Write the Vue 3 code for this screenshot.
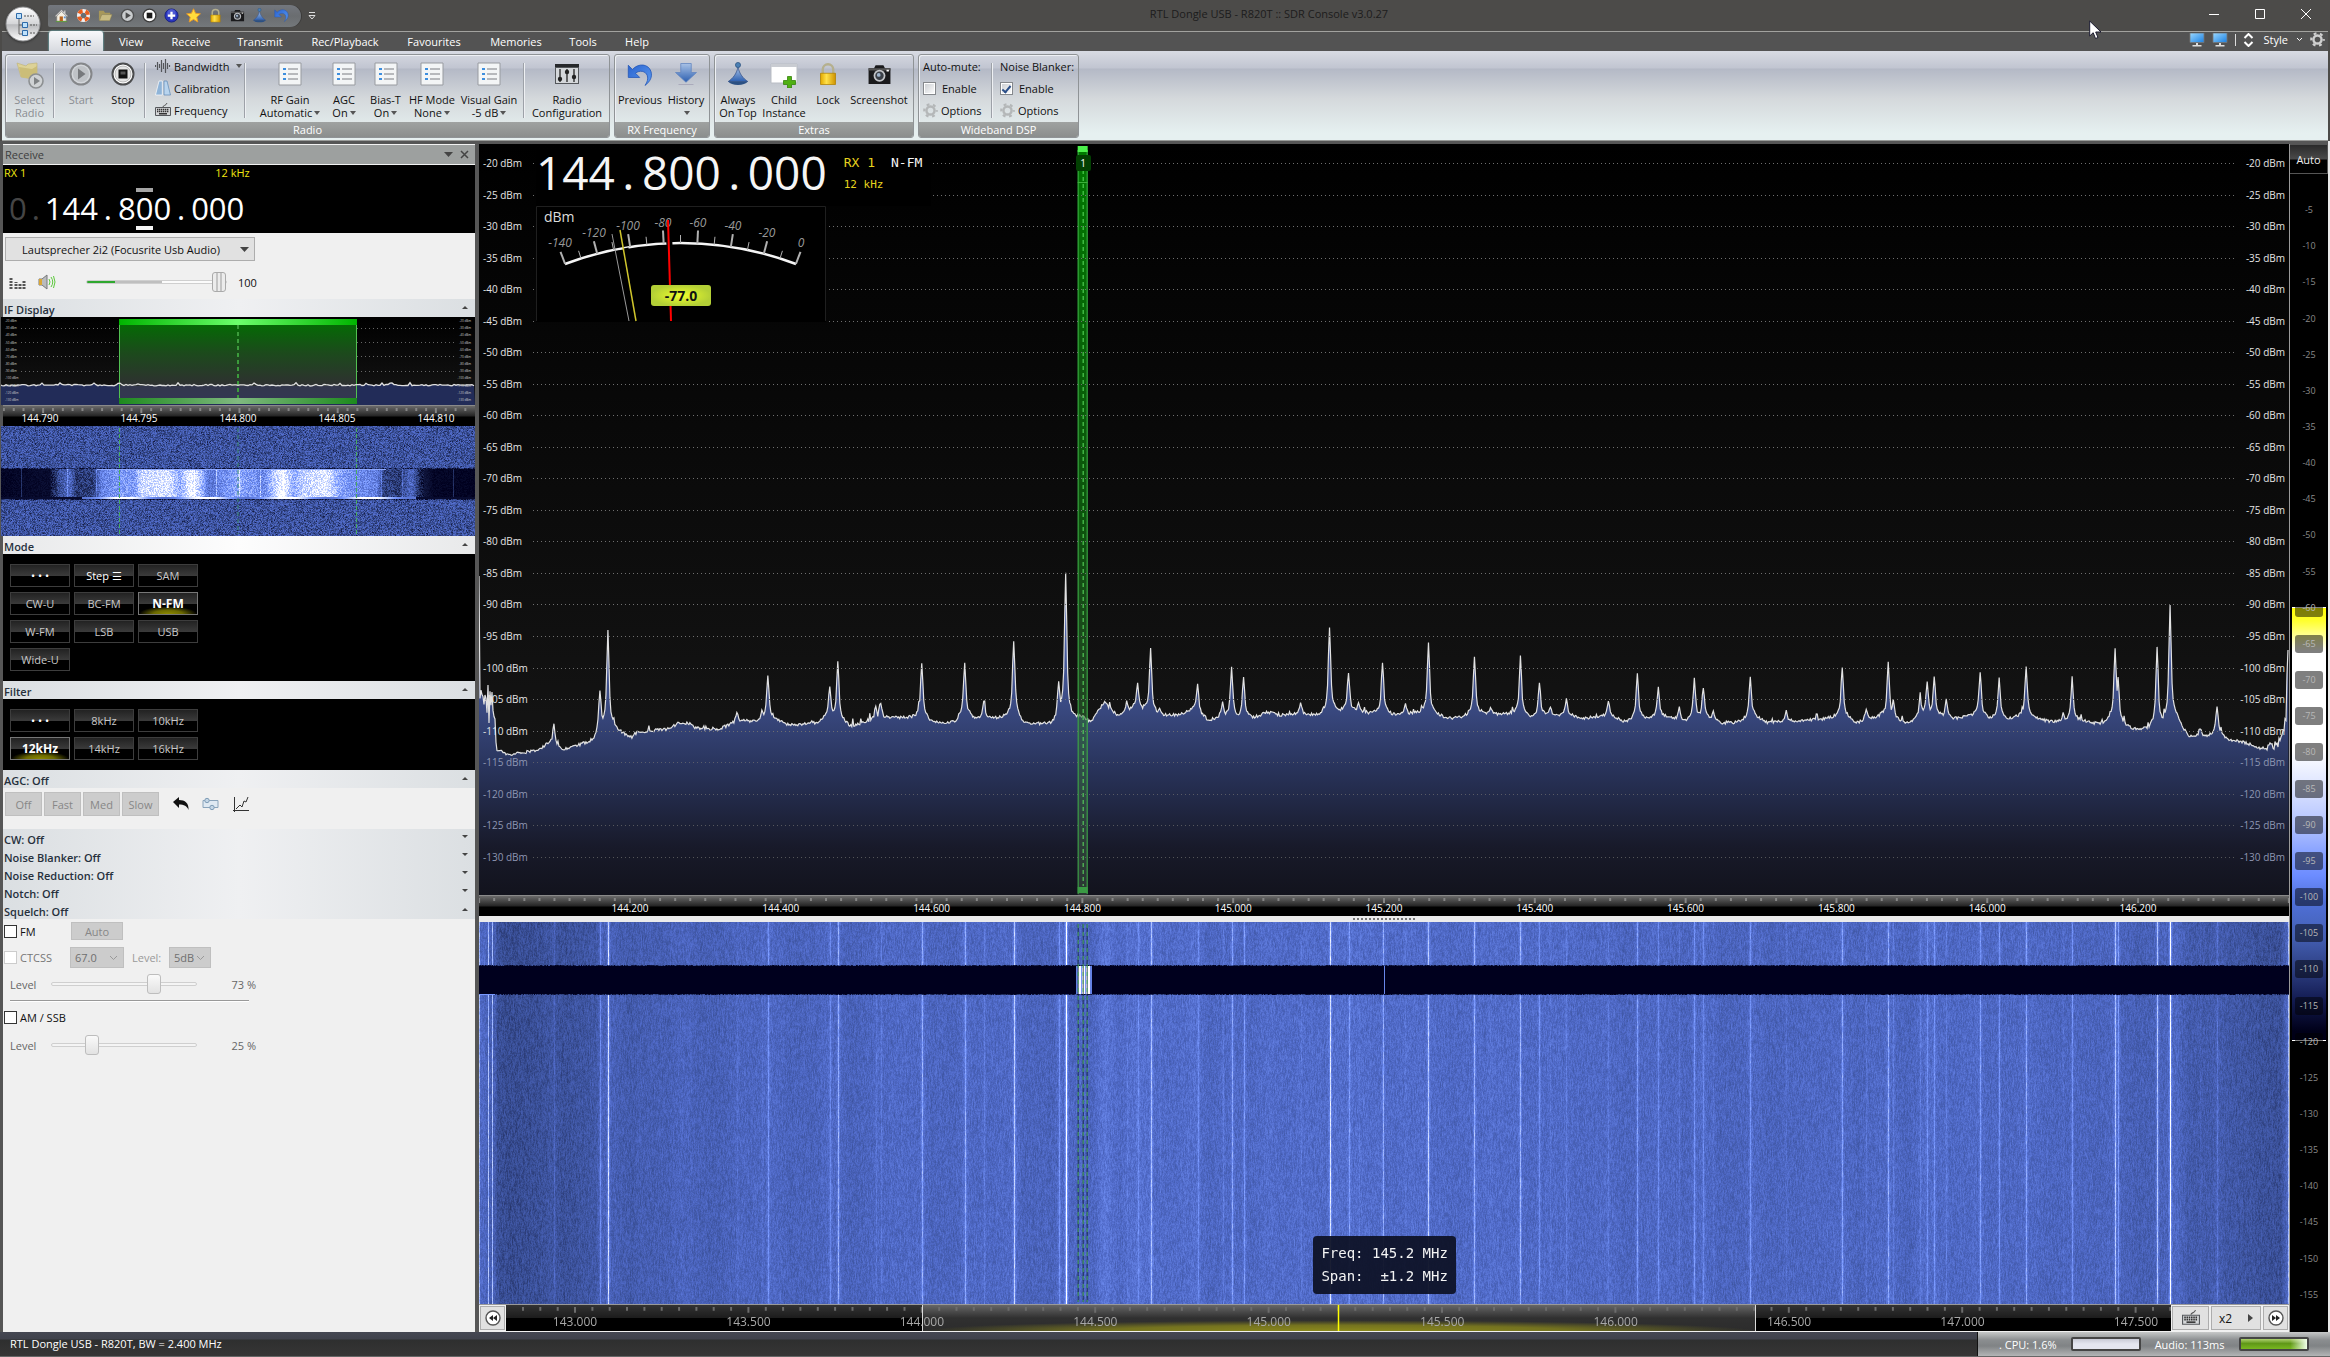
<script setup>
import { ref, computed, onMounted, onBeforeUnmount } from 'vue'

/* ---------- window chrome ---------- */
const quick = ['home', 'buoy', 'folder', 'playsm', 'stopsm', 'plus', 'star', 'lock', 'camera', 'cone', 'undo']
const tabs = [
  { t: 'Home', w: 54 }, { t: 'View', w: 56 }, { t: 'Receive', w: 64 }, { t: 'Transmit', w: 74 },
  { t: 'Rec/Playback', w: 96 }, { t: 'Favourites', w: 82 }, { t: 'Memories', w: 82 },
  { t: 'Tools', w: 52 }, { t: 'Help', w: 56 },
]
const gains = [
  { a: 'RF Gain', b: 'Automatic', w: 62 }, { a: 'AGC', b: 'On', w: 46 }, { a: 'Bias-T', b: 'On', w: 37 },
  { a: 'HF Mode', b: 'None', w: 56 }, { a: 'Visual Gain', b: '-5 dB', w: 58 },
]

/* ---------- receive panel ---------- */
const modes = ['• • •', 'Step ☰', 'SAM', 'CW-U', 'BC-FM', 'N-FM', 'W-FM', 'LSB', 'USB', 'Wide-U']
const filters = ['• • •', '8kHz', '10kHz', '12kHz', '14kHz', '16kHz']
const mode = ref('N-FM')
const filter = ref('12kHz')
const closed = ['CW: Off', 'Noise Blanker: Off', 'Noise Reduction: Off', 'Notch: Off']
const volume = ref(100)
const fmLevel = ref(73)
const amLevel = ref(25)
const fmOn = ref(false)
const amOn = ref(false)
const ifLevels = Array.from({ length: 12 }, (_, i) => -20 - i * 10)
const ifFreqs = ['144.790', '144.795', '144.800', '144.805', '144.810']

/* ---------- scales ---------- */
const levels = Array.from({ length: 23 }, (_, i) => -20 - i * 5)
const freqs = Array.from({ length: 11 }, (_, i) => (144.2 + i * 0.2).toFixed(3))
const navFreqs = Array.from({ length: 10 }, (_, i) => (143 + i * 0.5).toFixed(3))
const scale = Array.from({ length: 31 }, (_, i) => -5 - i * 5)

/* ---------- deterministic noise ---------- */
function rng(seed) {
  let s = seed >>> 0
  return () => {
    s = (s + 0x6d2b79f5) >>> 0
    let t = s
    t = Math.imul(t ^ (t >>> 15), t | 1)
    t ^= t + Math.imul(t ^ (t >>> 7), t | 61)
    return ((t ^ (t >>> 14)) >>> 0) / 4294967296
  }
}

/* ---------- spectrum data: 1811 bins across, 751 levels down ---------- */
const W = 1811
const H = 751
const floorPts = [
  [0, 570], [16, 590], [18, 606], [30, 611], [60, 606], [71, 599], [84, 606], [115, 596], [124, 582], [133, 584],
  [153, 593], [158, 588], [189, 585], [200, 579], [211, 579], [216, 584], [240, 585], [256, 579], [265, 577], [280, 577],
  [289, 573], [305, 578], [310, 581], [338, 579], [350, 572], [365, 579], [372, 582], [394, 576], [417, 573], [437, 574],
  [443, 572], [452, 578], [477, 578], [484, 571], [497, 575], [528, 573], [537, 571], [544, 579], [573, 580], [582, 571],
  [593, 576], [604, 572], [612, 578], [620, 566], [626, 558], [640, 573], [655, 564], [667, 566], [678, 571], [697, 571],
  [715, 566], [729, 576], [748, 573], [775, 574], [788, 568], [802, 571], [824, 570], [843, 571], [862, 567], [881, 568],
  [910, 571], [943, 569], [973, 574], [1008, 570], [1032, 570], [1051, 573], [1078, 571], [1106, 574], [1133, 572],
  [1146, 578], [1171, 574], [1187, 573], [1206, 578], [1225, 572], [1241, 579], [1263, 578], [1276, 573], [1290, 579],
  [1328, 576], [1355, 574], [1363, 572], [1379, 579], [1404, 572], [1431, 579], [1447, 569], [1474, 575], [1499, 571],
  [1512, 575], [1529, 575], [1542, 573], [1555, 573], [1569, 577], [1582, 578], [1605, 577], [1622, 580], [1632, 576],
  [1645, 581], [1657, 585], [1672, 585], [1685, 580], [1699, 575], [1710, 592], [1729, 593], [1740, 588], [1747, 595],
  [1769, 599], [1782, 604], [1802, 606], [1810, 570],
]
const peaks = [
  [75, 581], [121, 546], [129, 487], [258, 569], [283, 566], [289, 533], [351, 543], [359, 517], [397, 562], [402, 560],
  [443, 519], [486, 520], [505, 557], [535, 496], [580, 536], [587, 429], [648, 558], [659, 540], [672, 505], [681, 564],
  [719, 540], [744, 558], [753, 523], [765, 533], [822, 560], [851, 482], [870, 528], [880, 559], [904, 518], [927, 561],
  [950, 500], [996, 514], [1012, 564], [1042, 513], [1061, 538], [1072, 563], [1088, 554], [1130, 558], [1159, 529],
  [1180, 543], [1201, 564], [1216, 535], [1225, 543], [1235, 567], [1272, 533], [1308, 567], [1364, 523], [1388, 564],
  [1410, 518], [1415, 556], [1442, 554], [1449, 538], [1456, 534], [1468, 556], [1502, 528], [1521, 534], [1548, 523],
  [1585, 569], [1594, 535], [1637, 503], [1640, 532], [1679, 503], [1692, 462], [1722, 584], [1739, 564],
]
const floor = (() => {
  const out = []
  let k = 0
  for (let x = 0; x < W; x++) {
    while (k < floorPts.length - 2 && floorPts[k + 1][0] < x) k++
    const [x0, y0] = floorPts[k]
    const [x1, y1] = floorPts[k + 1]
    out.push(y0 + ((y1 - y0) * (x - x0)) / (x1 - x0))
  }
  return out
})()
const trace = (() => {
  const r = rng(77)
  const out = floor.slice()
  for (const [px, py] of peaks) {
    const h = floor[px] - py
    for (let d = -16; d <= 16; d++) {
      const x = px + d
      if (x < 0 || x >= W) continue
      const lift = h * (0.62 * Math.exp(-(d * d) / 2.2) + 0.38 * Math.exp(-Math.abs(d) / 3.6))
      out[x] = Math.min(out[x], floor[x] - lift)
    }
  }
  for (let x = 0; x < W; x++) {
    out[x] += (r() - 0.5) * 3
    if (r() > 0.97) out[x] -= r() * 6
  }
  for (let x = 0; x < 17; x++) out[x] = 560 + (r() - 0.4) * 40
  out[0] = 432
  out[9] = 541
  out[13] = 548
  for (let x = 1790; x < W; x++) out[x] -= r() * 12
  out[1809] = 530
  out[1810] = 506
  return out
})()
const linePath = 'M' + trace.map((y, x) => `${x} ${y.toFixed(1)}`).join('L')
const fillPath = `${linePath}L${W} ${H}L0 ${H}Z`

/* brightness of every bin in the waterfall: soft floor with thin carriers */
const glow = (() => {
  const out = floor.map((y) => 0.49 + (573 - y) * 0.0042)
  for (const [px, py] of peaks) {
    const h = floor[px] - py
    for (let d = -2; d <= 2; d++) {
      const x = px + d
      if (x < 0 || x >= W) continue
      const gain = d === 0 ? 0.0047 : Math.abs(d) === 1 ? 0.0012 : 0.0003
      out[x] = Math.max(out[x], 0.49 + (573 - floor[x]) * 0.0042 + h * gain)
    }
  }
  for (const x of [0, 9, 13, 1810]) out[x] = 0.8
  return out
})()

const ifPath = (() => {
  const r = rng(9)
  let s = 'M0 68'
  for (let x = 1; x <= 474; x += 2) s += `L${x} ${(69 - r() * 1.6 - (r() > 0.94 ? 2 : 0)).toFixed(1)}`
  return s
})()

/* ---------- axis ticks ---------- */
function ticks(first, step, end, major, offset, small, big) {
  let d = ''
  for (let i = 0, x = first; x < end; i++, x = first + i * step) {
    d += `M${x.toFixed(1)} 2v${(i + offset) % major === 0 ? big : small}`
  }
  return d
}
const mainTicks = ticks(0.1, 15.09, 1811, 10, 0, 3, 5)
const navTicks = ticks(17, 17.34, 1665, 10, 7, 4, 6)
const ifTicks = ticks(0.9, 9.86, 474, 10, 6, 3, 5)

/* ---------- S-meter ---------- */
const meterTicks = computed(() => {
  const out = []
  for (let i = 0; i < 15; i++) {
    const a = ((-20.6 + i * 2.943) * Math.PI) / 180
    const len = i % 2 ? 8 : 13
    out.push({
      x1: 144.5 + 328 * Math.sin(a), y1: 365 - 328 * Math.cos(a),
      x2: 144.5 + (328 + len) * Math.sin(a), y2: 365 - (328 + len) * Math.cos(a),
    })
  }
  return out
})
const meterLabels = [
  ['-140', 24, 41], ['-120', 58, 31], ['-100', 92, 24], ['-80', 127, 21],
  ['-60', 162, 21], ['-40', 197, 24], ['-20', 231, 31], ['0', 265, 41],
]

/* ---------- waterfalls ---------- */
const fall = ref(null)
const ifFall = ref(null)
const stops = [
  [0, 0, 0, 30], [0.2, 32, 44, 92], [0.35, 58, 80, 152], [0.5, 80, 106, 200],
  [0.7, 120, 152, 255], [0.88, 200, 214, 255], [1, 255, 255, 255],
]
function shade(v) {
  const t = Math.max(0, Math.min(1, v))
  let i = 0
  while (i < stops.length - 2 && stops[i + 1][0] < t) i++
  const a = stops[i]
  const b = stops[i + 1]
  const f = (t - a[0]) / (b[0] - a[0])
  return [a[1] + (b[1] - a[1]) * f, a[2] + (b[2] - a[2]) * f, a[3] + (b[3] - a[3]) * f]
}
function paint(canvas, level) {
  const w = (canvas.width = canvas.clientWidth)
  const h = (canvas.height = canvas.clientHeight)
  if (!w || !h) return
  const ctx = canvas.getContext('2d')
  const img = ctx.createImageData(w, h)
  const fn = level(w, h)
  for (let y = 0, p = 0; y < h; y++) {
    for (let x = 0; x < w; x++, p += 4) {
      const c = shade(fn(x, y))
      img.data[p] = c[0]
      img.data[p + 1] = c[1]
      img.data[p + 2] = c[2]
      img.data[p + 3] = 255
    }
  }
  ctx.putImageData(img, 0, 0)
}
function mainLevel(w) {
  const r = rng(5)
  const prev = new Float32Array(w)
  return (x, y) => {
    const bx = Math.round((x * (W - 1)) / (w - 1))
    prev[x] = prev[x] * 0.55 + (r() - 0.5) * 0.1
    if (y >= 44 && y < 72) {
      if (bx >= 599 && bx <= 610) return bx === 602 || bx === 606 ? 0.7 : 1
      if (bx === 597 || bx === 598 || bx === 611 || bx === 612) return 0.6
      return bx === 905 || bx === 906 ? 0.62 : 0
    }
    if (y === 72 && bx < 16) return 0.7
    if (y === 43 || y === 72) return r() * 0.4
    return glow[bx] + prev[x]
  }
}
const ifProfile = [
  [0, 0.02], [48, 0.05], [58, 0.35], [68, 0.5], [75, 0.25], [92, 0.28], [100, 0.6], [120, 0.7], [133, 0.68], [140, 0.9],
  [168, 0.92], [178, 0.75], [190, 1], [200, 0.8], [207, 0.55], [222, 0.65], [236, 0.75], [252, 0.68], [262, 0.62],
  [272, 0.85], [282, 1], [292, 0.75], [303, 0.88], [325, 0.95], [338, 0.75], [352, 0.65], [375, 0.6], [382, 0.3],
  [398, 0.25], [410, 0.5], [420, 0.12], [432, 0.03], [474, 0.01],
]
/* thin carriers that stand out of the burst */
const ifSpikes = [20, 66, 95, 193, 215, 238, 259, 282, 380, 401, 452]
function ifLevel(w) {
  const r = rng(31)
  return (x, y) => {
    const bx = (x * 474) / w
    const n = r()
    if (y >= 43 && y < 73) {
      if (y === 43 && bx > 95 && bx < 385) return 0.75
      if (y > 70) return bx > 80 && bx < 415 ? 0.55 + 0.5 * Math.sin(bx / 26) ** 2 : 0.05
      let i = 0
      while (i < ifProfile.length - 2 && ifProfile[i + 1][0] < bx) i++
      const [a, va] = ifProfile[i]
      const [b, vb] = ifProfile[i + 1]
      const v = va + ((vb - va) * (bx - a)) / (b - a)
      const lift = ifSpikes.includes(Math.round(bx)) ? 0.2 : 0
      return v + lift + (n - 0.5) * (v > 0.1 ? 0.26 : 0.06)
    }
    if (y === 42 || y === 73) return n * 0.35
    return 0.38 + (n - 0.5) * 0.3 - (r() > 0.9 ? 0.12 : 0)
  }
}
function draw() {
  paint(fall.value, mainLevel)
  paint(ifFall.value, ifLevel)
}
onMounted(() => {
  draw()
  window.addEventListener('resize', draw)
})
onBeforeUnmount(() => window.removeEventListener('resize', draw))
</script>

<template>
  <div class="app">
    <svg class="defs" width="0" height="0" aria-hidden="true">
      <defs>
        <linearGradient id="gFill" x1="0" y1="429" x2="0" y2="751" gradientUnits="userSpaceOnUse">
          <stop offset="0" stop-color="#5b74c8" /><stop offset="0.4" stop-color="#3b4b84" />
          <stop offset="0.6" stop-color="#29345c" /><stop offset="0.85" stop-color="#181a2a" /><stop offset="1" stop-color="#12131d" />
        </linearGradient>
        <linearGradient id="gBand" x1="0" y1="0" x2="0" y2="1">
          <stop offset="0" stop-color="#008000" stop-opacity="0.95" /><stop offset="0.5" stop-color="#0d700d" stop-opacity="0.7" /><stop offset="1" stop-color="#49604e" stop-opacity="0.45" />
        </linearGradient>
        <linearGradient id="gIf" x1="0" y1="0" x2="0" y2="1">
          <stop offset="0" stop-color="#007000" /><stop offset="0.4" stop-color="#1c4a1c" /><stop offset="0.75" stop-color="#2d322f" /><stop offset="1" stop-color="#2e2d48" />
        </linearGradient>
        <linearGradient id="gIfTop"><stop offset="0" stop-color="#00b400" /><stop offset="0.5" stop-color="#6cff6c" /><stop offset="1" stop-color="#00b400" /></linearGradient>
        <linearGradient id="gIfBot"><stop offset="0" stop-color="#1d8a1d" /><stop offset="0.5" stop-color="#80b980" /><stop offset="1" stop-color="#1d8a1d" /></linearGradient>
        <linearGradient id="gBlue" x1="0" y1="0" x2="0" y2="1"><stop offset="0" stop-color="#a9c2e6" /><stop offset="1" stop-color="#2c5fb0" /></linearGradient>
        <linearGradient id="gUndo" x1="0" y1="0" x2="1" y2="1"><stop offset="0" stop-color="#2a63cf" /><stop offset="1" stop-color="#5c9bf2" /></linearGradient>
        <linearGradient id="gScreen" x1="0" y1="0" x2="1" y2="1"><stop offset="0" stop-color="#9ad8ff" /><stop offset="1" stop-color="#1b7fe0" /></linearGradient>
        <linearGradient id="gGold" x1="0" y1="0" x2="1" y2="0"><stop offset="0" stop-color="#e2a800" /><stop offset="0.4" stop-color="#ffe14a" /><stop offset="1" stop-color="#cf9300" /></linearGradient>
        <radialGradient id="gBadge"><stop offset="0" stop-color="#f0ff2c" /><stop offset="1" stop-color="#b3cf36" /></radialGradient>
        <linearGradient id="gOrb" x1="0" y1="0" x2="0" y2="1"><stop offset="0" stop-color="#fff" /><stop offset="0.5" stop-color="#d4d5d8" /><stop offset="0.52" stop-color="#b9babd" /><stop offset="1" stop-color="#fff" /></linearGradient>
      </defs>
      <symbol id="i-home" viewBox="0 0 16 16"><path d="M3 8v6h10V8L8 3z" fill="#f4efe2" stroke="#8a8576" stroke-width=".6" /><path d="M1 8.500 8 1.500l2.500 2.500V2.500h2V6L15 8.500l-1 1L8 3.600 2 9.500z" fill="#cfcfcf" stroke="#666" stroke-width=".5" /><path d="M6 9h3.500v5H6z" fill="#b8641e" /><path d="M10.500 9h2v2h-2z" fill="#5a90d0" /><path d="M2 14.500h12" stroke="#5a9c3a" /></symbol>
      <symbol id="i-buoy" viewBox="0 0 16 16"><circle cx="8" cy="8" r="5" fill="none" stroke="#eee" stroke-width="4" /><circle cx="8" cy="8" r="5" fill="none" stroke="#e85c1c" stroke-width="4" stroke-dasharray="4.500 3.354" stroke-dashoffset="-1.700" /></symbol>
      <symbol id="i-folder" viewBox="0 0 16 16"><path d="M1 3h5l1.500 2H13v2H4l-2 6H1z" fill="#a7975a" /><path d="M4 7h11l-2.500 6.500H1.500z" fill="#c8bb82" stroke="#8d8050" stroke-width=".5" /></symbol>
      <symbol id="i-playsm" viewBox="0 0 16 16"><circle cx="8" cy="8" r="6.500" fill="#c9ccce" stroke="#4e4f50" stroke-width="1.500" /><path d="M6 4.500v7L11.500 8z" fill="#4a4b4c" /></symbol>
      <symbol id="i-stopsm" viewBox="0 0 16 16"><circle cx="8" cy="8" r="6.800" fill="#fff" stroke="#3a3a3a" stroke-width="1.400" /><path d="M5 5h6v6H5z" fill="#1a1a1a" /></symbol>
      <symbol id="i-plus" viewBox="0 0 16 16"><circle cx="8" cy="8" r="7" fill="#2a36c0" stroke="#1a2280" /><circle cx="8" cy="5.500" r="4.500" fill="#6f7ae6" opacity=".5" /><path d="M8 4v8M4 8h8" stroke="#fff" stroke-width="2.400" /></symbol>
      <symbol id="i-star" viewBox="0 0 16 16"><path d="M8 .8l2.200 4.800 5.200.6-3.900 3.500 1.100 5.200L8 12.200 3.400 14.900l1.100-5.200L.6 6.200l5.200-.6z" fill="#ffdc3c" stroke="#e6972a" /></symbol>
      <symbol id="i-lock" viewBox="0 0 16 16"><path d="M4.500 8V5a3.500 3.500 0 0 1 7 0v3" fill="none" stroke="#b5b08e" stroke-width="1.600" /><path d="M3 7.500h10V15H3z" fill="url(#gGold)" stroke="#b08100" stroke-width=".5" /></symbol>
      <symbol id="i-camera" viewBox="0 0 16 16"><path d="M1 4h3.500l1-2h5l1 2H15v10H1z" fill="#1a1a1c" /><path d="M1 4h14v1.500H1z" fill="#555" /><circle cx="8" cy="8.800" r="3.800" fill="#c2c4c8" /><circle cx="8" cy="8.800" r="2.700" fill="#3b4048" /><circle cx="7.500" cy="8.300" r="1.200" fill="#9fb4cc" /><path d="M12.500 5h1.500v1h-1.500z" fill="#fff" /></symbol>
      <symbol id="i-cone" viewBox="0 0 16 16"><path d="M8 3.500C9 8 11.500 11 14.500 13H1.500C4.500 11 7 8 8 3.500z" fill="url(#gBlue)" stroke="#33508a" stroke-width=".5" /><path d="M1.500 13h13c-1 1.600-3.500 2.300-6.500 2.300S2.500 14.600 1.500 13z" fill="#2b5083" /><circle cx="8" cy="2" r="1.700" fill="#4b80b4" stroke="#2c5380" stroke-width=".5" /></symbol>
      <symbol id="i-undo" viewBox="0 0 16 16"><path d="M.8 2v7.500h7L5.200 6.900c2.400-2 6.300-1.500 7.300 1.500.6 2 0 4-1.400 6C14.300 12 15.800 9 14.700 5.700 13.200 1.200 7.200.4 3.300 4.600z" fill="url(#gUndo)" stroke="#2458b8" stroke-width=".5" /></symbol>
      <symbol id="i-down" viewBox="0 0 16 16"><path d="M4.500 1h7v6H15l-7 6.500L1 7h3.500z" fill="url(#gBlue)" stroke="#5f83bf" stroke-width=".5" /><path d="M3 15h10" stroke="#aab" stroke-width=".8" /></symbol>
      <symbol id="i-list" viewBox="0 0 24 24"><path d="M1 1h22v22H1z" fill="#f3f5f6" stroke="#989ba0" /><path d="M5 6h3v2H5zM5 11h3v2H5zM5 16h3v2H5z" fill="#3d8ede" /><path d="M10 7h10M10 12h10M10 17h10" stroke="#7a7d82" /></symbol>
      <symbol id="i-select" viewBox="0 0 28 28"><path d="M1 2l9 3 2-2 9-1v14l-4 2-12-2z" fill="#ddd297" stroke="#c1b67c" stroke-width=".7" /><path d="M3 6l13 2 5-3v11l-5 2-11-2z" fill="#cbbd78" /><circle cx="20" cy="20" r="7" fill="#cfd2d4" stroke="#8d9092" stroke-width="1.600" /><path d="M18 16v8l6-4z" fill="#808385" /></symbol>
      <symbol id="i-play" viewBox="0 0 24 24"><circle cx="12" cy="12" r="10.500" fill="#d3d6da" stroke="#85878a" stroke-width="2" /><circle cx="12" cy="12" r="8" fill="#bfc2c6" /><path d="M9 6.500v11l7.500-5.500z" fill="#77797c" /></symbol>
      <symbol id="i-stop" viewBox="0 0 24 24"><circle cx="12" cy="12" r="10.500" fill="#fff" stroke="#4b4c4e" stroke-width="2" /><circle cx="12" cy="12" r="8" fill="#e4e4e4" stroke="#999" stroke-width=".6" /><path d="M7.500 7.500h9v9h-9z" fill="#111" /><path d="M9.500 9.500h5v3h-5z" fill="#555" /></symbol>
      <symbol id="i-wave" viewBox="0 0 16 16"><path d="M.5 7v2M2.500 4v8M4.500 6v4M6.500 2v12M8.500 5v6M10.500 1v14M12.500 5v6M14.500 7v2" stroke="#54565a" stroke-width="1.200" /></symbol>
      <symbol id="i-cal" viewBox="0 0 16 16"><path d="M4 1h3.300v14H.5z" fill="#8fb4d8" stroke="#fff" stroke-width=".7" /><path d="M9 1h3l3.500 14H9z" fill="#b8d4ee" stroke="#5b88b5" stroke-width=".7" /></symbol>
      <symbol id="i-kbd" viewBox="0 0 16 16"><path d="M8 5c0-2 3-1 4-4" fill="none" stroke="#555" /><path d="M.5 5.500h15v8H.5z" fill="#d4d6d8" stroke="#55585c" /><path d="M2 7.500h12M2 9.500h12" stroke="#333" stroke-dasharray="1.400 .6" stroke-width="1.500" /><path d="M4 11.700h8" stroke="#333" stroke-width="1.400" /></symbol>
      <symbol id="i-conf" viewBox="0 0 24 24"><path d="M0 2h24v20H0z" fill="#54575b" /><path d="M0 2h24v3H0z" fill="#26282b" /><path d="M1 6h22v15H1z" fill="#d4d7da" /><path d="M5 7v13M12 7v13M19 7v13" stroke="#222" stroke-width="1.300" /><circle cx="5" cy="17" r="2.200" fill="#222" /><circle cx="12" cy="10" r="2.200" fill="#222" /><circle cx="19" cy="15" r="2.200" fill="#222" /></symbol>
      <symbol id="i-child" viewBox="0 0 28 26"><path d="M1 2h26v19H1z" fill="#fff" stroke="#b9bdc4" /><path d="M1 2h26v3H1z" fill="#c9ccd2" /><path d="M17.500 14.500h4v4h4v4h-4v3.500h-4v-3.500h-4v-4h4z" fill="#4fb012" stroke="#35840a" stroke-width=".8" /></symbol>
      <symbol id="i-gear" viewBox="0 0 16 16"><circle cx="8" cy="8" r="4.300" fill="none" stroke="currentColor" stroke-width="2.600" /><circle cx="8" cy="8" r="6.600" fill="none" stroke="currentColor" stroke-width="2.400" stroke-dasharray="3 3.911" stroke-dashoffset="1.500" /></symbol>
      <symbol id="i-monitor" viewBox="0 0 16 14"><path d="M1 0h14v9.500H1z" fill="url(#gScreen)" stroke="#777" stroke-width=".8" /><path d="M7 10h2v2h3.500v1.500h-9V12H7z" fill="#ddd" /></symbol>
      <symbol id="i-seek" viewBox="0 0 16 16"><circle cx="8" cy="8" r="7" fill="#fff" stroke="#555" stroke-width="1.400" /><path d="M8 5v6L4 8zM12 5v6L8 8z" fill="#222" /></symbol>
    </svg>

    <!-- Title bar -->
    <header class="title">
      <div class="quick">
        <button v-for="q in quick" :key="q" class="ib" :aria-label="q"><svg width="15" height="15"><use :href="'#i-' + q" /></svg></button>
      </div>
      <button class="ib more" aria-label="Customise toolbar"><svg width="8" height="9" viewBox="0 0 8 9"><path d="M1 1.500h6M1 4.500h6L4 8z" fill="none" stroke="#ddd" /></svg></button>
      <h1>RTL Dongle USB - R820T :: SDR Console v3.0.27</h1>
      <div class="winbtns">
        <button class="ib" aria-label="Minimise"><svg width="12" height="12"><path d="M1 6.500h10" stroke="#fff" /></svg></button>
        <button class="ib" aria-label="Maximise"><svg width="12" height="12"><path d="M1.500 1.500h9v9h-9z" fill="none" stroke="#fff" /></svg></button>
        <button class="ib" aria-label="Close"><svg width="12" height="12"><path d="M1 1l10 10M11 1L1 11" stroke="#fff" /></svg></button>
      </div>
      <svg class="cursor" width="13" height="20" viewBox="0 0 13 20" aria-hidden="true"><path d="M.7 1v15l3.500-3.300L6.500 18.500l2.500-1-2.300-5.500H12z" fill="#fff" stroke="#1a1a30" /></svg>
      <button class="orb ib" aria-label="Application menu">
        <svg width="36" height="36" viewBox="0 0 36 36"><circle cx="18" cy="18" r="17" fill="url(#gOrb)" stroke="#8f9092" /><path d="M14 11v17h6M14 19h6" fill="none" stroke="#666" /><g fill="#bfe1fb" stroke="#2e6aa8"><path d="M11.500 7.500h5v5h-5zM17.500 16.500h5v5h-5zM17.500 24.500h5v5h-5z" /></g><path d="M19 10h10M25 19h7M25 27h5" stroke="#555" stroke-dasharray="2 1" /></svg>
      </button>
    </header>

    <!-- Tabs -->
    <nav class="tabs">
      <button v-for="(t, i) in tabs" :key="t.t" class="tab" :class="{ on: i === 0 }" :style="{ width: t.w + 'px' }">{{ t.t }}</button>
      <div class="tabtools">
        <svg width="16" height="14"><use href="#i-monitor" /></svg>
        <svg width="16" height="14"><use href="#i-monitor" /></svg>
        <i class="bar"></i>
        <svg width="11" height="14" viewBox="0 0 11 14"><path d="M1.500 5l4-4 4 4M1.500 9l4 4 4-4" fill="none" stroke="#fff" stroke-width="2" /></svg>
        <button class="ib style">Style <svg width="7" height="5" viewBox="0 0 7 5"><path d="M1 1l2.500 2.500L6 1" fill="none" stroke="#fff" /></svg></button>
        <svg width="15" height="15" color="#d0d0d0"><use href="#i-gear" /></svg>
      </div>
    </nav>

    <!-- Ribbon -->
    <section class="ribbon">
      <div class="group g1">
        <div class="grow">
          <button class="rb dim select"><svg width="28" height="28"><use href="#i-select" /></svg><span>Select<br />Radio</span></button>
          <i class="sep"></i>
          <button class="rb dim pl"><svg width="24" height="24"><use href="#i-play" /></svg><span>Start</span></button>
          <button class="rb"><svg width="24" height="24"><use href="#i-stop" /></svg><span>Stop</span></button>
          <i class="sep"></i>
          <div class="stack">
            <button class="ib row"><svg width="16" height="16"><use href="#i-wave" /></svg>Bandwidth<b class="caret"></b></button>
            <button class="ib row"><svg width="16" height="16"><use href="#i-cal" /></svg>Calibration</button>
            <button class="ib row"><svg width="16" height="16"><use href="#i-kbd" /></svg>Frequency</button>
          </div>
          <i class="sep"></i>
          <div class="gains">
            <button v-for="g in gains" :key="g.a" class="rb" :style="{ width: g.w + 'px' }"><svg width="24" height="24"><use href="#i-list" /></svg><span>{{ g.a }}<br />{{ g.b }}<b class="caret"></b></span></button>
          </div>
          <i class="sep"></i>
          <button class="rb conf"><svg width="24" height="24"><use href="#i-conf" /></svg><span>Radio<br />Configuration</span></button>
        </div>
        <h2>Radio</h2>
      </div>
      <div class="group g2">
        <div class="grow">
          <button class="rb prev"><svg width="28" height="26"><use href="#i-undo" /></svg><span>Previous</span></button>
          <button class="rb"><svg width="24" height="24"><use href="#i-down" /></svg><span>History<br /><b class="caret"></b></span></button>
        </div>
        <h2>RX Frequency</h2>
      </div>
      <div class="group g3">
        <div class="grow">
          <button class="rb wide3"><svg width="24" height="24"><use href="#i-cone" /></svg><span>Always<br />On Top</span></button>
          <button class="rb wide3"><svg width="28" height="26"><use href="#i-child" /></svg><span>Child<br />Instance</span></button>
          <button class="rb"><svg width="24" height="24"><use href="#i-lock" /></svg><span>Lock</span></button>
          <button class="rb shot"><svg width="25" height="25"><use href="#i-camera" /></svg><span>Screenshot</span></button>
        </div>
        <h2>Extras</h2>
      </div>
      <div class="group g4">
        <div class="grow">
          <div class="stack dsp">
            <span class="row">Auto-mute:</span>
            <label class="row"><input type="checkbox" class="rcb" /> Enable</label>
            <button class="ib row"><svg width="15" height="15" color="#b4b7b8"><use href="#i-gear" /></svg>Options</button>
          </div>
          <i class="sep"></i>
          <div class="stack dsp">
            <span class="row">Noise Blanker:</span>
            <label class="row"><input type="checkbox" class="rcb" checked /> Enable</label>
            <button class="ib row"><svg width="15" height="15" color="#b4b7b8"><use href="#i-gear" /></svg>Options</button>
          </div>
        </div>
        <h2>Wideband DSP</h2>
      </div>
    </section>

    <div class="work">
      <!-- Receive panel -->
      <aside class="panel">
        <div class="phead">Receive
          <span><svg width="9" height="5" viewBox="0 0 9 5"><path d="M0 0h9L4.500 5z" fill="#444" /></svg><svg width="9" height="9" viewBox="0 0 9 9"><path d="M1 1l7 7M8 1L1 8" stroke="#444" stroke-width="1.500" /></svg></span>
        </div>
        <div class="rx">
          <div class="rxinfo"><span>RX 1</span><span>12 kHz</span></div>
          <div class="digits"><span class="off">0<i>.</i></span>144<i>.</i>8<em>0</em>0<i>.</i>000</div>
        </div>
        <div class="audio">
          <div class="selwrap wide">
            <select aria-label="Output device"><option>Lautsprecher 2i2 (Focusrite Usb Audio)</option></select>
            <svg width="9" height="5" viewBox="0 0 9 5"><path d="M0 0h9L4.500 5z" fill="#444" /></svg>
          </div>
          <div class="volrow">
            <svg width="17" height="14" viewBox="0 0 17 14"><path d="M2 14V2M7 14V7M11 14V8M15 14V5" stroke="#555" stroke-width="3" stroke-dasharray="2 1" fill="none" /></svg>
            <svg class="spk" width="18" height="16" viewBox="0 0 18 16"><path d="M1 5h3l5-4v14l-5-4H1z" fill="#b9bbbd" stroke="#77797b" /><path d="M1 5h3v6H1z" fill="#d8a637" /><path d="M11 5q2 3 0 6M13 3q3.500 5 0 10M15.500 2q3 6 0 12" fill="none" stroke="#5cc83c" /></svg>
            <input v-model="volume" type="range" class="vol" aria-label="Volume" />
            <output>{{ volume }}</output>
          </div>
        </div>
        <div class="sec">IF Display<b class="up"></b></div>
        <div class="ifspec">
          <svg class="plot" viewBox="0 0 474 88" preserveAspectRatio="none">
            <path d="M20 11.500H455M20 25.500H455M20 39.500H455M20 54.500H455M20 82.500H455" stroke="#666" stroke-dasharray="1 3" />
            <path :d="ifPath + 'L474 88L0 88Z'" fill="#222c58" />
            <path d="M118 2h237v85h-237z" fill="url(#gIf)" />
            <path d="M118 69h237v18h-237z" fill="#363a58" opacity=".7" />
            <path d="M118.500 2v85M355.500 2v85" stroke="#52c052" />
            <path d="M118 2h238v6h-238z" fill="url(#gIfTop)" /><path d="M118 81h238v6h-238z" fill="url(#gIfBot)" />
            <path d="M237 8v73" stroke="#3c9c3c" stroke-dasharray="4 3" stroke-width="2" />
            <path :d="ifPath" fill="none" stroke="#e0e0e0" stroke-width="1.300" />
          </svg>
          <div class="iflabels"><span v-for="l in ifLevels" :key="l">{{ l }} dBm</span></div>
          <div class="iflabels r"><span v-for="l in ifLevels" :key="l">{{ l }} dBm</span></div>
        </div>
        <div class="axis ifaxis">
          <svg viewBox="0 0 474 20" preserveAspectRatio="none"><path :d="ifTicks" stroke="#858585" stroke-width="2" /></svg>
          <div class="pts"><span v-for="f in ifFreqs" :key="f">{{ f }}</span></div>
        </div>
        <div class="iffall">
          <canvas ref="ifFall"></canvas>
          <svg class="plot" viewBox="0 0 474 110" preserveAspectRatio="none"><path d="M118.500 2v106M355.500 2v106" stroke="#48ac60" stroke-dasharray="4 2" /><path d="M237 2v106" stroke="#3c8a6c" stroke-dasharray="4 3" /></svg>
        </div>
        <div class="sec hot">Mode<b class="up"></b></div>
        <div class="keys modes">
          <button v-for="m in modes" :key="m" :class="{ on: m === mode, lit: m === '• • •' || m === 'Step ☰' }" @click="mode = m">{{ m }}</button>
        </div>
        <div class="sec">Filter<b class="up"></b></div>
        <div class="keys">
          <button v-for="m in filters" :key="m" :class="{ on: m === filter, lit: m === '• • •' }" @click="filter = m">{{ m }}</button>
        </div>
        <div class="sec">AGC: Off<b class="up"></b></div>
        <div class="agc">
          <button v-for="a in ['Off', 'Fast', 'Med', 'Slow']" :key="a" class="gb" disabled>{{ a }}</button>
          <svg width="18" height="16" viewBox="0 0 18 16"><path d="M1 6l6-5v3c6 0 10 3 9.500 10C15 10 12 8.500 7 8.500V12z" fill="#111" /></svg>
          <svg width="18" height="14" viewBox="0 0 18 14"><path d="M1 3.500h15v7H1z" fill="#dfe9f2" stroke="#8aa4bb" /><circle cx="5" cy="3.500" r="2.200" fill="#c3d6e6" stroke="#7f9cb6" /><circle cx="10" cy="10.500" r="2.200" fill="#c3d6e6" stroke="#7f9cb6" /></svg>
          <svg width="18" height="17" viewBox="0 0 18 17"><path d="M2.500 1v15M1 14.500h16M4 13l4-4 2 2 2-6 2 1 2-5" fill="none" stroke="#333" /></svg>
        </div>
        <div v-for="c in closed" :key="c" class="sec">{{ c }}<b class="dn"></b></div>
        <div class="sec">Squelch: Off<b class="up"></b></div>
        <div class="sq">
          <div class="sqrow"><label class="ck"><input v-model="fmOn" type="checkbox" />FM</label><button class="gb auto" disabled>Auto</button></div>
          <div class="sqrow second">
            <label class="ck off"><input type="checkbox" disabled />CTCSS</label>
            <div class="selwrap tone"><select disabled aria-label="CTCSS tone"><option>67.0</option></select><svg width="9" height="6" viewBox="0 0 9 6"><path d="M1 1l3.500 3.500L8 1" fill="none" stroke="#999" /></svg></div>
            <label class="lv" for="lvl">Level:</label>
            <div class="selwrap db"><select id="lvl" disabled><option>5dB</option></select><svg width="9" height="6" viewBox="0 0 9 6"><path d="M1 1l3.500 3.500L8 1" fill="none" stroke="#999" /></svg></div>
          </div>
          <div class="lvl"><label for="fml">Level</label><input id="fml" v-model="fmLevel" type="range" disabled /><output>{{ fmLevel }} %</output></div>
          <hr />
          <div class="sqrow am"><label class="ck"><input v-model="amOn" type="checkbox" />AM / SSB</label></div>
          <div class="lvl low"><label for="aml">Level</label><input id="aml" v-model="amLevel" type="range" disabled /><output>{{ amLevel }} %</output></div>
        </div>
      </aside>

      <!-- Spectrum and waterfall -->
      <main class="main">
        <div class="spec">
          <svg class="plot" viewBox="0 0 1811 751" preserveAspectRatio="none">
            <path :d="fillPath" fill="url(#gFill)" />
            <path :d="linePath" fill="none" stroke="#e2e2e2" stroke-width="1.200" />
            <path d="M599 6h10v745h-10z" fill="url(#gBand)" />
            <path d="M599.500 6v744M608.500 6v744" stroke="#3fae4a" />
            <path d="M604.500 12v730" stroke="#5de060" stroke-dasharray="4 3" />
            <path d="M599 2h10v6h-10z" fill="#4cf04c" /><path d="M599 38h10v1h-10z" fill="#3cb03c" /><path d="M599 743h10v6h-10z" fill="#3a9a44" />
          </svg>
          <div class="rows">
            <div v-for="l in levels" :key="l" class="lrow" :class="{ deep: l < -112 }"><span>{{ l }} dBm</span><i></i><span class="rt">{{ l }} dBm</span></div>
          </div>
          <span class="mark">1</span>
          <div class="overlay">
            <div class="vfo">
              <div class="big">144<i>.</i>800<i>.</i>000</div>
              <div class="vinfo"><div><span class="y">RX 1</span><span>N-FM</span></div><div class="y small">12 kHz</div></div>
            </div>
            <svg class="meter" width="290" height="116" viewBox="0 0 290 116">
              <path d="M0 0h290v116H0z" fill="#000" />
              <path d="M.5 115V.5h289V115" fill="none" stroke="#1f1f1f" />
              <text x="8" y="16" fill="#ddd" font-size="14">dBm</text>
              <path d="M29 58A328 328 0 0 1 260 58" fill="none" stroke="#f5f5f5" stroke-width="2.500" />
              <line v-for="(t, i) in meterTicks" :key="i" v-bind="t" stroke="#b0b0b0" :stroke-width="i % 2 ? 1 : 2" />
              <text v-for="l in meterLabels" :key="l[0]" :x="l[1]" :y="l[2]" text-anchor="middle" fill="#999" font-size="12" font-style="italic">{{ l[0] }}</text>
              <path d="M81 45L83 55M90 42L92 52" stroke="#000" stroke-width="5" /><path d="M133 32L134 46" stroke="#000" stroke-width="6" />
              <path d="M76 28L93 115" stroke="#999" /><path d="M84 24L100 115" stroke="#cfc52c" stroke-width="1.500" /><path d="M132 14L135 115" stroke="#f00" stroke-width="2" />
              <rect x="115" y="79" width="60" height="21" rx="3" fill="url(#gBadge)" />
              <text x="145" y="95" text-anchor="middle" fill="#111" font-size="14" font-weight="700">-77.0</text>
            </svg>
          </div>
        </div>
        <div class="axis">
          <svg viewBox="0 0 1811 20" preserveAspectRatio="none"><path :d="mainTicks" stroke="#858585" stroke-width="2" /></svg>
          <div class="pts"><span v-for="f in freqs" :key="f">{{ f }}</span></div>
        </div>
        <div class="split"><i></i></div>
        <div class="fall">
          <canvas ref="fall"></canvas>
          <svg class="plot" viewBox="0 0 1811 382" preserveAspectRatio="none"><path d="M599.500 2v378M604.500 2v378M608.500 2v378" stroke="#0c2030" opacity=".8" /><path d="M599.500 2v378M604.500 2v378M608.500 2v378" stroke="#49a865" stroke-dasharray="4 4" /></svg>
          <pre class="tip">Freq: 145.2 MHz
Span:  ±1.2 MHz</pre>
        </div>
        <div class="nav">
          <button class="nb" aria-label="Seek down"><svg width="16" height="16"><use href="#i-seek" /></svg></button>
          <div class="navscale">
            <svg class="plot" viewBox="0 0 1665 27" preserveAspectRatio="none">
              <defs>
                <linearGradient id="gn" x1="0" y1="0" x2="0" y2="1"><stop offset="0" stop-color="#666" /><stop offset=".5" stop-color="#303030" /><stop offset="1" stop-color="#2c2c2c" /></linearGradient>
                <radialGradient id="gy" cx=".5" cy="1" r=".5" gradientTransform="translate(0 -.7) scale(1 1.700)"><stop offset="0" stop-color="#8c8a1c" /><stop offset=".55" stop-color="#7c7a1e" stop-opacity=".9" /><stop offset="1" stop-color="#7a7820" stop-opacity="0" /></radialGradient>
              </defs>
              <path d="M416 0h834v27H416z" fill="url(#gn)" /><path d="M416 14h834v13H416z" fill="url(#gy)" />
              <path :d="navTicks" stroke="#6c6c6c" stroke-width="2" />
              <path d="M416.500 0v27M1249.500 0v27" stroke="#ddd" /><path d="M832.500 0v27" stroke="#ff0" stroke-width="1.500" />
            </svg>
            <div class="pts"><span v-for="f in navFreqs" :key="f">{{ f }}</span></div>
          </div>
          <div class="nbs">
            <button class="nb k" aria-label="Keyboard"><svg width="18" height="18"><use href="#i-kbd" /></svg></button>
            <button class="nb x">x2 <svg width="5" height="8" viewBox="0 0 5 8"><path d="M0 0l5 4-5 4z" fill="#444" /></svg></button>
            <button class="nb" aria-label="Seek up"><svg width="16" height="16" class="flip"><use href="#i-seek" /></svg></button>
          </div>
        </div>
      </main>

      <!-- Level scale -->
      <aside class="scale">
        <button class="autob">Auto</button>
        <div class="ramp">
          <div class="grad"></div>
          <div class="marks"><span v-for="s in scale" :key="s" :class="{ chip: s <= -60 && s >= -120 }"><b>{{ s }}</b></span></div>
        </div>
      </aside>
    </div>

    <!-- Status bar -->
    <footer class="status">
      <span class="st">RTL Dongle USB - R820T, BW = 2.400 MHz</span>
      <div class="meters">
        <span>. CPU: 1.6%</span><i class="pb"></i>
        <span>Audio: 113ms</span><i class="pb full"></i>
      </div>
    </footer>
  </div>
</template>

<style>
html, body { margin: 0; background: #4c4b49; }
</style>

<style scoped>
* { box-sizing: border-box; }
.app { display: flex; flex-direction: column; height: 100vh; min-height: 1200px; background: #4c4b49; color: #111; font: 11px/13px "Open Sans", "Noto Sans", sans-serif; overflow: hidden; }
button, select, input, output, label { font: inherit; color: inherit; margin: 0; }
button { cursor: pointer; }
h1, h2 { margin: 0; font: inherit; }
.defs { position: absolute; }
.ib { border: 0; background: none; padding: 0; display: flex; align-items: center; }

.title { position: relative; display: flex; align-items: center; height: 31px; padding-left: 48px; }
.quick { display: flex; gap: 7px; height: 22px; width: 253px; padding-left: 6px; border-radius: 2px 11px 11px 2px; background: linear-gradient(#73777e, #6a6d70 50%, #74787b); box-shadow: 1px 0 #3c3b3a; }
.more { margin-left: 7px; }
.title h1 { flex: 1; align-self: flex-start; text-align: center; color: #1c1c1c; padding-right: 108px; line-height: 28px; }
.winbtns { display: flex; gap: 34px; padding-right: 18px; position: absolute; right: 0; top: 8px; }
.cursor { position: absolute; left: 89.65%; top: 20px; z-index: 3; }
.orb { position: absolute; left: 5px; top: 6px; z-index: 2; filter: drop-shadow(0 1px 1px #333); }

.tabs { display: flex; height: 20px; border-top: 1px solid #a2a29f; padding-left: 47px; margin: 0 2px; background: #535353; color: #fff; }
.tab { margin-top: -1px; height: 20px; padding: 0; border: 0; background: none; text-align: center; }
.tab.on { background: linear-gradient(#f8f9fb, #d8dbe0); color: #111; border-radius: 3px 3px 0 0; box-shadow: 0 0 2px #7ff4ff; }
.tabtools { margin-left: auto; display: flex; align-items: center; gap: 7px; padding: 0 3px 4px 0; }
.bar { width: 1px; height: 12px; background: #ddd; }
.bar + svg { margin-right: 3px; }
.style { gap: 8px; color: #fff; }

.ribbon { display: flex; gap: 4px; height: 90px; padding: 3px 0 2px 3px; margin: 0 2px; background: linear-gradient(#d8dbe3, #c1c5d1 17px, #b4b9c6 18px, #d5d9dc 48px, #e6f0f0 82px); border-bottom: 1px solid #9a9c9a; }
.group { display: flex; flex-direction: column; border: 1px solid #8f9396; border-radius: 3px; box-shadow: inset 1px 1px #eef0f4; overflow: hidden; flex: none; }
.g1 { width: 605px; } .g2 { width: 96px; } .g3 { width: 200px; } .g4 { width: 161px; }
.grow { display: flex; height: 68px; }
.group h2 { height: 15px; line-height: 15px; text-align: center; color: #fff; background: linear-gradient(#9fa2a1, #8b8e8d); }
.rb { display: grid; grid-template-rows: 38px auto; justify-items: center; align-content: start; width: 42px; padding: 0; border: 0; background: none; white-space: nowrap; }
.rb svg { margin-top: 7px; }
.rb span { display: block; width: 0; display: flex; justify-content: center; text-align: center; }
.rb span { width: auto; display: block; margin: 0 -20px; }
.dim { color: #8a8d92; }
.pl { margin-left: 5px; }
.select { width: 47px; }
.select svg { margin-top: 6px; }
.prev { width: 50px; }
.wide3 { width: 46px; }
.shot { width: 60px; }
.sep { width: 2px; margin: 8px 0 4px; background: linear-gradient(90deg, #9da1a8 50%, #eef0f3 50%); flex: none; }
.stack { display: flex; flex-direction: column; width: 98px; padding-left: 9px; }
.row { display: flex; align-items: center; height: 22px; gap: 4px; white-space: nowrap; }
.stack .ib.row { gap: 3px; }
.caret { display: inline-block; border: 3px solid transparent; border-top: 4px solid #555; border-bottom: 0; margin-left: 2px; vertical-align: 2px; }
.row .caret { margin-left: 4px; }
.gains { display: flex; padding: 0 5px 0 13px; }
.conf { width: 84px; }
.dsp { width: 72px; padding-left: 4px; }
.dsp + .sep + .dsp { width: 84px; padding-left: 7px; }
.rcb { appearance: none; width: 13px; height: 13px; border: 1px solid #85888c; background: linear-gradient(135deg, #c9ccd0, #fff); box-shadow: inset 0 0 0 1px #fff; margin-right: 2px; display: grid; place-items: center; }
.rcb:checked::after { content: ""; width: 3px; height: 7px; border: solid #2b4f88; border-width: 0 2px 2px 0; transform: rotate(40deg); }

.work { flex: 1; display: flex; min-height: 0; padding: 3px 0 0 3px; background: #565656; border-right: 2px solid #e8e8e8; }
.panel { width: 472px; flex: none; display: flex; flex-direction: column; background: #f0f0f0; margin-right: 4px; }
.panel > * { flex: none; }
.phead { display: flex; justify-content: space-between; align-items: center; height: 21px; padding: 0 6px 0 2px; background: #9da09f; border: solid #f2f2f2; border-width: 1px 0; color: #3e3e3e; }
.phead span { display: flex; gap: 7px; align-items: center; }
.rx { height: 68px; background: #000; color: #fff; }
.rxinfo { display: flex; gap: 189px; padding: 0 1px; color: #f0e610; height: 19px; line-height: 15px; }
.digits { display: flex; padding-left: 6px; font-size: 31px; line-height: 48px; height: 48px; }
.digits i, .digits em, .big i { font-style: normal; text-align: center; }
.digits i { width: 20px; }
.digits .off i { width: 18px; }
.digits em { background: linear-gradient(#a5a5a5, #a5a5a5) 50% 4px / 17px 4px no-repeat, linear-gradient(#f4f4f4, #f4f4f4) 50% 42px / 17px 4px no-repeat; }
.off { color: #454545; }
.digits .off { display: flex; }
.audio { height: 66px; padding: 4px 0 0 2px; }
.selwrap { position: relative; display: flex; }
.selwrap svg { position: absolute; right: 6px; top: 50%; margin-top: -2px; pointer-events: none; }
.selwrap select { appearance: none; width: 100%; border: 1px solid #adadad; background: #e1e1e1; border-radius: 0; padding: 0 4px; opacity: 1; }
.selwrap select:disabled { background: #ccc; border-color: #bfbfbf; color: #6f6f6f; }
.wide { width: 250px; height: 24px; }
.wide select { text-align-last: center; padding: 0 22px 0 4px; }
.volrow { display: flex; align-items: center; height: 36px; margin-top: 3px; padding-left: 4px; }
.spk { margin: 0 30px 0 12px; }
.volrow output { margin-left: 11px; }

input[type="range"] { appearance: none; background: none; height: 20px; }
input[type="range"]::-webkit-slider-runnable-track { height: 4px; border: 1px solid #cfcfcf; border-radius: 2px; background: #f4f4f4; }
input[type="range"]::-webkit-slider-thumb { appearance: none; width: 14px; height: 20px; margin-top: -9px; border: 1px solid #bdbdbd; border-radius: 3px; background: linear-gradient(#fafafa, #e2e2e2); }
.vol { width: 141px; }
.vol::-webkit-slider-runnable-track { background: linear-gradient(90deg, #2fa82f 28px, #bfbfbf 28px 75px, #fbfbfb 75px) !important; }
.vol::-webkit-slider-thumb { background: linear-gradient(90deg, transparent 3px, #c4c4c4 3px 5px, transparent 5px 7px, #c4c4c4 7px 9px, transparent 9px), #ececec !important; border-color: #aaa !important; }

.sec { display: flex; justify-content: space-between; height: 18px; line-height: 22px; padding: 0 7px 0 1px; font-weight: 600; color: #26303c; background: linear-gradient(90deg, #dbdfe2, #eff0f2 50%, #dbdfe2); }
.sec.hot { background: linear-gradient(90deg, #e8e9ea, #fdfdfd 50%, #e8e9ea); }
.up, .dn { width: 0; height: 0; border: 3px solid transparent; margin-top: 7px; }
.up { border-bottom: 3px solid #444; border-top: 0; }
.dn { border-top: 3px solid #444; border-bottom: 0; margin-top: 6px; }

.ifspec { position: relative; height: 88px; background: linear-gradient(#000, #161616); margin-left: -2px; }
.plot { position: absolute; inset: 0; width: 100%; height: 100%; }
.iflabels { position: absolute; left: 4px; top: 1px; bottom: 2px; display: flex; flex-direction: column; justify-content: space-between; font-size: 3px; line-height: 6px; color: #ccc; }
.iflabels.r { left: auto; right: 4px; text-align: right; }

.axis { position: relative; height: 21px; flex: none; color: #fff; font-size: 10px; background: linear-gradient(#6a6a6a, #242424 10px, #000 11px); border-top: 1px solid #8a8a8a; }
.axis svg { position: absolute; left: 0; top: 0; width: 100%; height: 20px; }
.pts { position: relative; display: flex; justify-content: space-between; padding: 6px 151px 0; }
.pts span { width: 0; display: flex; justify-content: center; white-space: nowrap; }
.ifaxis .pts { padding: 6px 39px 0 37px; }
.iffall { position: relative; height: 110px; margin-left: -2px; }
canvas { display: block; width: 100%; height: 100%; }

.keys { display: grid; grid-template-columns: repeat(3, 60px); grid-auto-rows: 23px; gap: 5px 4px; align-content: start; padding: 10px 7px; height: 71px; background: #000; }
.keys.modes { height: 127px; }
.keys button { border: 1px solid #3d3d3d; padding: 0 0 1px; color: #c8c8c8; background: linear-gradient(#222, #3a3a3a 50%, #000 51%); white-space: nowrap; }
.keys button.lit { color: #fff; }
.keys button.on { color: #fff; font-size: 12px; font-weight: 700; border-color: #777; background: radial-gradient(50% 36% at 50% 100%, #8d8a00, #6b6900 50%, transparent), linear-gradient(#222, #3a3a3a 50%, #000 51%); }

.agc { display: flex; align-items: center; gap: 2px; height: 41px; padding: 4px 2px 13px; }
.gb { width: 37px; height: 24px; padding: 0; border: 1px solid #bfbfbf; background: #ccc; color: #878787; cursor: default; }
.agc svg { margin-left: 11px; }
.agc svg + svg { margin-left: 10px; }

.sq { width: 253px; padding: 3px 0 0 1px; color: #666; }
.sqrow { display: flex; align-items: center; height: 18px; }
.sqrow.second { height: 22px; margin-top: 6px; }
.ck { display: flex; align-items: center; gap: 3px; width: 67px; color: #111; white-space: nowrap; }
.ck.off { color: #777; width: 66px; }
.ck input { appearance: none; width: 13px; height: 13px; border: 1px solid #333; background: #fff; }
.ck.off input { border-color: #ccc; }
.auto { width: 52px; height: 18px; }
.tone { width: 54px; height: 21px; } .db { width: 42px; height: 21px; }
.lv { width: 45px; padding-left: 8px; color: #999; }
.lvl { display: flex; align-items: center; height: 22px; margin-top: 5px; padding-left: 6px; }
.lvl label { width: 41px; }
.lvl input { width: 146px; }
.lvl output { margin-left: auto; }
.sq hr { margin: 5px 7px 0 6px; border: 0; border-top: 1px solid #999; border-bottom: 1px solid #fff; }
.am { margin-top: 6px; }
.lvl.low { margin-top: 8px; }

.main { flex: 1; min-width: 0; display: flex; flex-direction: column; border-right: 1px solid #999; background: #000; }
.spec { position: relative; flex: 751 1 0; min-height: 0; background: linear-gradient(#000, #0c0c0c 50%, #141414 80%); }
.rows { position: absolute; inset: 0; display: flex; flex-direction: column; padding: 4px 4px 22px; }
.lrow { flex: 1; display: flex; align-items: center; color: #e4e4e4; font-size: 10px; }
.lrow span { width: 50px; }
.lrow i { flex: 1; height: 1px; background: repeating-linear-gradient(90deg, #6f6f6f 0 1px, transparent 1px 4px); }
.lrow .rt { text-align: right; }
.lrow.deep { color: #8e96b2; }
.lrow.deep i { opacity: 0.7; }
.mark { position: absolute; left: 33.35%; top: 11px; width: 15px; height: 16px; margin-left: -7px; border-radius: 2px; background: #024002; color: #fff; font-size: 10px; line-height: 16px; text-align: center; }
.overlay { position: absolute; left: 57px; top: 6px; }
.vfo { display: flex; width: 395px; height: 56px; background: #000; color: #f5f5f5; }
.big { display: flex; font-size: 46px; line-height: 44px; height: 50px; }
.big i { width: 27px; }
.vinfo { padding: 4px 0 0 17px; font-family: "DejaVu Sans Mono", monospace; font-size: 13px; line-height: 18px; }
.vinfo .y { color: #e6d21e; } .vinfo div span + span { margin-left: 16px; }
.vinfo .small { font-size: 11px; line-height: 25px; }
.meter { display: block; font-family: "Open Sans", sans-serif; }

.split { flex: none; height: 6px; background: #ebebeb; display: flex; align-items: center; justify-content: center; }
.split i { width: 63px; height: 2px; background: repeating-linear-gradient(90deg, #777 0 2px, transparent 2px 4px); }
.fall { position: relative; flex: 382 1 0; min-height: 0; }
.fall canvas { position: absolute; inset: 0; }
.tip { position: absolute; left: 46.1%; bottom: 10px; margin: 0; padding: 6px 8px; border-radius: 4px; background: rgba(14, 18, 38, 0.94); color: #f4f4f4; font: 14px/23px "DejaVu Sans Mono", monospace; }
.nav { flex: none; display: flex; height: 28px; border-top: 1px solid #999; border-bottom: 1px solid #f0f0f0; background: #f0f0f0; }
.nb { display: flex; align-items: center; justify-content: center; width: 25px; padding: 0; border: 1px solid #adadad; background: #e1e1e1; margin: 1px; font-size: 12px; }
.nb.k { width: 37px; } .nb.x { width: 50px; gap: 16px; }
.nbs { display: flex; }
.flip { transform: scaleX(-1); }
.navscale { position: relative; flex: 1; background: linear-gradient(#333, #1c1c1c 50%, #000 51%); }
.navscale .pts { padding: 9px 35px 0 69px; color: #a8a8a8; font-size: 12px; line-height: 15px; }

.scale { width: 38px; flex: none; display: flex; flex-direction: column; background: #000; color: #8a8a8a; }
.autob { height: 30px; border: 1px solid #555; border-left: 0; padding: 0; color: #eee; background: linear-gradient(#2a2a2a, #4a4a4a 14px, #000 15px); }
.ramp { flex: 1; position: relative; display: flex; min-height: 0; }
.grad { position: absolute; left: 2px; right: 2px; top: 37.35%; height: 37.55%; border: solid #fff; border-width: 1px 0; background: linear-gradient(#ff0, #ffff30 3%, #fff 10%, #fff 33%, #d9e1ff 42%, #b4c4ff 50%, #85a0ff 57%, #6c8cff 62%, #4f70d8 68%, #4460b4 76%, #2c3d80 84%, #121a50 91%, #000018 98%); }
.marks { flex: 1; position: relative; display: flex; flex-direction: column; padding: 18px 5px 19px; font-size: 9px; }
.marks span { flex: 1; display: flex; align-items: center; }
.marks b { flex: 1; text-align: center; font-weight: 400; line-height: 18px; border-radius: 3px; }
.marks .chip b { background: rgba(0, 0, 0, 0.5); color: #b8b8b8; }

.status { flex: none; display: flex; height: 25px; background: linear-gradient(#454752, #40424c 7px, #2e2f2f 8px, #363535); color: #fff; border-bottom: 1px solid #666; }
.st { flex: 1; padding-left: 10px; line-height: 23px; }
.meters { display: flex; align-items: center; width: 353px; padding-left: 21px; gap: 14px; background: linear-gradient(#c6c8c8, #8b8e90 8px, #808385 14px, #b3b5b6); border-left: 1px solid #111; }
.pb { width: 70px; height: 14px; border: 2px solid #454545; border-radius: 2px; background: linear-gradient(#c8cad6, #e4e6f0 50%); flex: none; }
.pb.full { background: linear-gradient(90deg, transparent 75%, #f0ffe8), linear-gradient(#aed070, #609818 45%, #78b820); }
</style>
